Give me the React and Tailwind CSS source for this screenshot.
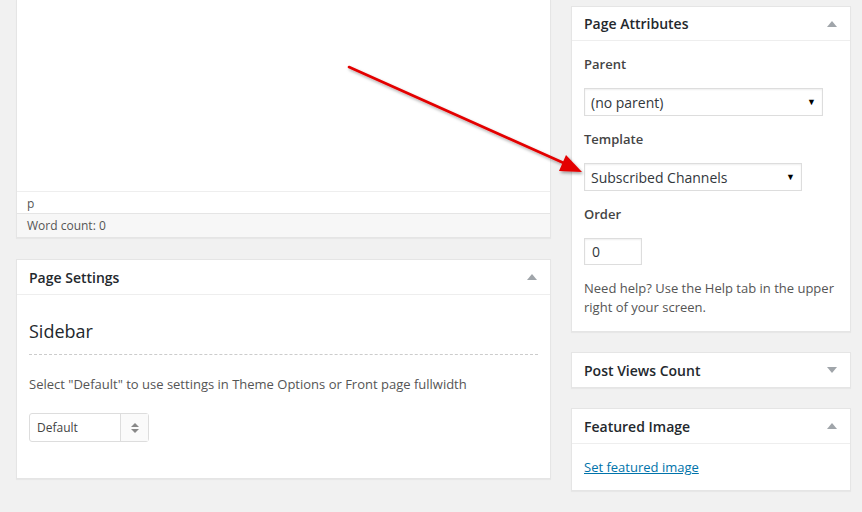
const font = { fontFamily: '"Open Sans", "Noto Sans", sans-serif' }

function Caret({ down }) {
  return (
    <svg width="10" height="8" viewBox="0 0 10 8" className="fill-[#a0a5aa]">
      {down ? <polygon points="0,1 10,1 5,7" /> : <polygon points="0,7 10,7 5,1" />}
    </svg>
  )
}

function Box({ title, down, children, className = '', head = 'h-[34px]' }) {
  return (
    <div className={`bg-white border border-[#e5e5e5] shadow-[0_1px_1px_rgba(0,0,0,0.04)] ${className}`}>
      <div className={`flex items-center justify-between ${head} pl-3 pr-[13px] ${children ? 'border-b border-[#eee]' : ''}`}>
        <h2 className="text-[14px] font-semibold text-[#23282d]">{title}</h2>
        <Caret down={down} />
      </div>
      {children}
    </div>
  )
}

function FakeSelect({ label, width }) {
  return (
    <div className={`${width} h-[28px] border border-[#ddd] shadow-[inset_0_1px_2px_rgba(0,0,0,0.07)] flex items-center justify-between pl-[6px] pr-[6px] text-[14px] text-[#32373c]`}>
      <span>{label}</span>
      <span className="text-[9px] text-black">▼</span>
    </div>
  )
}

export default function App() {
  return (
    <div className="relative w-[862px] h-[512px] overflow-hidden bg-[#f1f1f1] text-[#444]" style={font}>
      <div className="flex gap-[20px] pl-[16px]">
        {/* Left column */}
        <div className="w-[535px] flex flex-col">
          <div className="bg-white border border-t-0 border-[#e5e5e5] shadow-[0_1px_1px_rgba(0,0,0,0.04)]">
            <div className="h-[192px] border-b border-[#eee]"></div>
            <div className="h-[22px] flex items-center pt-[2px] px-[10px] text-[12px] text-[#555] border-b border-[#e5e5e5]">p</div>
            <div className="h-[23px] flex items-center pt-[1px] px-[10px] text-[12px] text-[#555] bg-[#f7f7f7]">Word count: 0</div>
          </div>

          <Box title="Page Settings" className="mt-[21px]" head="h-[35px]">
            <div className="px-3 pb-[36px]">
              <div className="pt-[24px] pb-[11px] text-[18px] text-[#23282d] leading-[24px]">Sidebar</div>
              <div className="border-t border-dashed border-[#ccc]"></div>
              <p className="mt-[19px] text-[13px] leading-[20px] text-[#555]">Select "Default" to use settings in Theme Options or Front page fullwidth</p>
              <div className="mt-[19px] w-[120px] h-[29px] border border-[#ddd] rounded-[3px] flex">
                <div className="flex-1 flex items-center pl-[7px] text-[12px] text-[#444]">Default</div>
                <div className="w-[28px] border-l border-[#ddd] bg-[#fafafa] flex flex-col items-center justify-center gap-[1px]">
                  <svg width="8" height="12" viewBox="0 0 8 12" className="fill-[#888]">
                    <polygon points="0,5 8,5 4,1" />
                    <polygon points="0,7 8,7 4,11" />
                  </svg>
                </div>
              </div>
            </div>
          </Box>
        </div>

        {/* Right column */}
        <div className="w-[280px] flex flex-col pt-[6px]">
          <Box title="Page Attributes">
            <div className="px-3 pb-[14px] text-[13px]">
              <div className="pt-[13px] font-semibold text-[#444] leading-[20px]">Parent</div>
              <div className="mt-[14px]"><FakeSelect label="(no parent)" width="w-[239px]" /></div>
              <div className="mt-[13px] font-semibold leading-[20px]">Template</div>
              <div className="mt-[14px]"><FakeSelect label="Subscribed Channels" width="w-[218px]" /></div>
              <div className="mt-[13px] font-semibold leading-[20px]">Order</div>
              <div className="mt-[14px] w-[58px] h-[27px] border border-[#ddd] shadow-[inset_0_1px_2px_rgba(0,0,0,0.07)] flex items-center pl-[7px] text-[14px] text-[#32373c]">0</div>
              <p className="mt-[14px] leading-[19px] text-[#555]">Need help? Use the Help tab in the upper right of your screen.</p>
            </div>
          </Box>

          <Box title="Post Views Count" down className="mt-[20px]" />

          <Box title="Featured Image" className="mt-[20px]" head="h-[35px]">
            <div className="px-3 pt-[14px] pb-[13px] text-[13px] leading-[19px]">
              <a className="text-[#0073aa] underline">Set featured image</a>
            </div>
          </Box>
        </div>
      </div>

      {/* Annotation arrow */}
      <svg className="absolute left-0 top-0 pointer-events-none" width="862" height="512">
        <defs>
          <filter id="sh" x="-10%" y="-10%" width="120%" height="120%">
            <feDropShadow dx="1.5" dy="2" stdDeviation="1.5" floodColor="#000" floodOpacity="0.35" />
          </filter>
        </defs>
        <g filter="url(#sh)">
          <line x1="349" y1="67" x2="566" y2="164" stroke="#e30000" strokeWidth="2.6" strokeLinecap="round" />
          <polygon points="582,172 559,171 566,155" fill="#e30000" />
        </g>
      </svg>
    </div>
  )
}
